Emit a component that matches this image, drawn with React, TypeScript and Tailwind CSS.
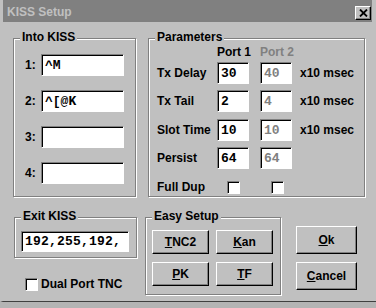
import React from 'react';

const sunken =
  'bg-white border border-t-[#808080] border-l-[#808080] border-r-white border-b-white shadow-[inset_1px_1px_0_#000]';
const raised =
  'bg-[#c0c0c0] border border-t-white border-l-white border-r-black border-b-black shadow-[inset_-1px_-1px_0_#808080]';
const mono = "font-['Liberation_Mono',monospace] text-[13px] font-bold";

function Group({ title, className, children }: { title: string; className: string; children: React.ReactNode }) {
  return (
    <div className={`relative border border-[#808080] shadow-[inset_1px_1px_0_#fff,1px_1px_0_#fff] ${className}`}>
      <span className="absolute -top-[9px] left-[6px] px-[2px] bg-[#c0c0c0] leading-[14px]">{title}</span>
      {children}
    </div>
  );
}

function Field({ value, className = '', dim = false }: { value: string; className?: string; dim?: boolean }) {
  return (
    <div className={`${sunken} ${mono} flex items-center pl-[3px] leading-none ${dim ? 'text-[#808080]' : 'text-black'} ${className}`}>
      {value}
    </div>
  );
}

function Check({ className = '' }: { className?: string }) {
  return <div className={`${sunken} w-[13px] h-[13px] shrink-0 ${className}`} />;
}

function Btn({ k, rest, className }: { k: string; rest: string; className: string }) {
  return (
    <button className={`${raised} flex items-center justify-center leading-none ${className}`}>
      <span>
        <span className="underline underline-offset-[1px]">{k}</span>
        {rest}
      </span>
    </button>
  );
}

const kissRows = [
  { n: '1:', v: '^M' },
  { n: '2:', v: '^[@K' },
  { n: '3:', v: '' },
  { n: '4:', v: '' },
];

const params = [
  { label: 'Tx Delay', p1: '30', p2: '40', unit: true, mt: 'mt-[3px]' },
  { label: 'Tx Tail', p1: '2', p2: '4', unit: true, mt: 'mt-[6px]' },
  { label: 'Slot Time', p1: '10', p2: '10', unit: true, mt: 'mt-[7px]' },
  { label: 'Persist', p1: '64', p2: '64', unit: false, mt: 'mt-[6px]' },
];

export default function App() {
  return (
    <div className="w-[376px] h-[308px] bg-[#b4b4b4] overflow-hidden font-['Liberation_Sans',Arial,sans-serif] text-[12px] font-bold text-black">
      <div className="w-[376px] h-[302px] bg-[#c0c0c0] border-l-[3px] border-l-[#c0c0c0] border-b border-b-[#404040] flex flex-col">
        {/* title bar */}
        <div className="h-[22px] w-[369px] bg-[#808080] flex items-center justify-between pl-[4px] pr-[1px]">
          <span className="text-[#c0c0c0] text-[12px] mt-[2px]">KISS Setup</span>
          <div className={`${raised} w-[16px] h-[14px] mt-[4px] flex items-center justify-center`}>
            <svg width="9" height="8" viewBox="0 0 9 8">
              <path d="M1 0.5 L8 7.5 M8 0.5 L1 7.5" stroke="#000" strokeWidth="1.8" />
            </svg>
          </div>
        </div>

        <div className="pl-[10px] pt-[16px] flex flex-col">
          {/* top row */}
          <div className="flex gap-[12px]">
            <Group title="Into KISS" className="w-[123px] h-[159px] pt-[15px] pl-[11px] flex flex-col gap-[14px]">
              {kissRows.map((r) => (
                <div key={r.n} className="flex items-center">
                  <span className="w-[16px]">{r.n}</span>
                  <Field value={r.v} className="w-[83px] h-[22px]" />
                </div>
              ))}
            </Group>

            <Group title="Parameters" className="w-[217px] h-[159px] pt-[6px] pl-[8px] flex flex-col">
              <div className="flex leading-[14px]">
                <span className="w-[60px]" />
                <span className="w-[43px]">Port 1</span>
                <span className="text-[#808080]">Port 2</span>
              </div>
              {params.map((p) => (
                <div key={p.label} className={`flex items-center ${p.mt}`}>
                  <span className="w-[60px]">{p.label}</span>
                  <Field value={p.p1} className="w-[32px] h-[22px]" />
                  <Field value={p.p2} dim className="w-[32px] h-[22px] ml-[11px]" />
                  {p.unit && <span className="ml-[8px]">x10 msec</span>}
                </div>
              ))}
              <div className="flex items-center mt-[9px]">
                <span className="w-[70px]">Full Dup</span>
                <Check />
                <Check className="ml-[31px]" />
              </div>
            </Group>
          </div>

          {/* bottom row */}
          <div className="flex mt-[20px]">
            <div className="flex flex-col ml-[1px]">
              <Group title="Exit KISS" className="w-[123px] h-[41px] pt-[13px] pl-[6px]">
                <Field value="192,255,192," className="w-[108px] h-[21px] tracking-[0.2px]" />
              </Group>
              <div className="flex items-center mt-[17px] ml-[11px] gap-[3px]">
                <Check />
                <span>Dual Port TNC</span>
              </div>
            </div>

            <Group title="Easy Setup" className="w-[136px] h-[78px] ml-[8px] pt-[12px] pl-[6px] grid grid-cols-[57px_57px] gap-x-[7px] gap-y-[8px] content-start">
              <Btn k="T" rest="NC2" className="h-[24px]" />
              <Btn k="K" rest="an" className="h-[24px]" />
              <Btn k="P" rest="K" className="h-[24px]" />
              <Btn k="T" rest="F" className="h-[24px]" />
            </Group>

            <div className="flex flex-col ml-[15px] mt-[9px] gap-[8px]">
              <Btn k="O" rest="k" className="w-[61px] h-[28px]" />
              <Btn k="C" rest="ancel" className="w-[61px] h-[28px]" />
            </div>
          </div>
        </div>
      </div>
    </div>
  );
}
